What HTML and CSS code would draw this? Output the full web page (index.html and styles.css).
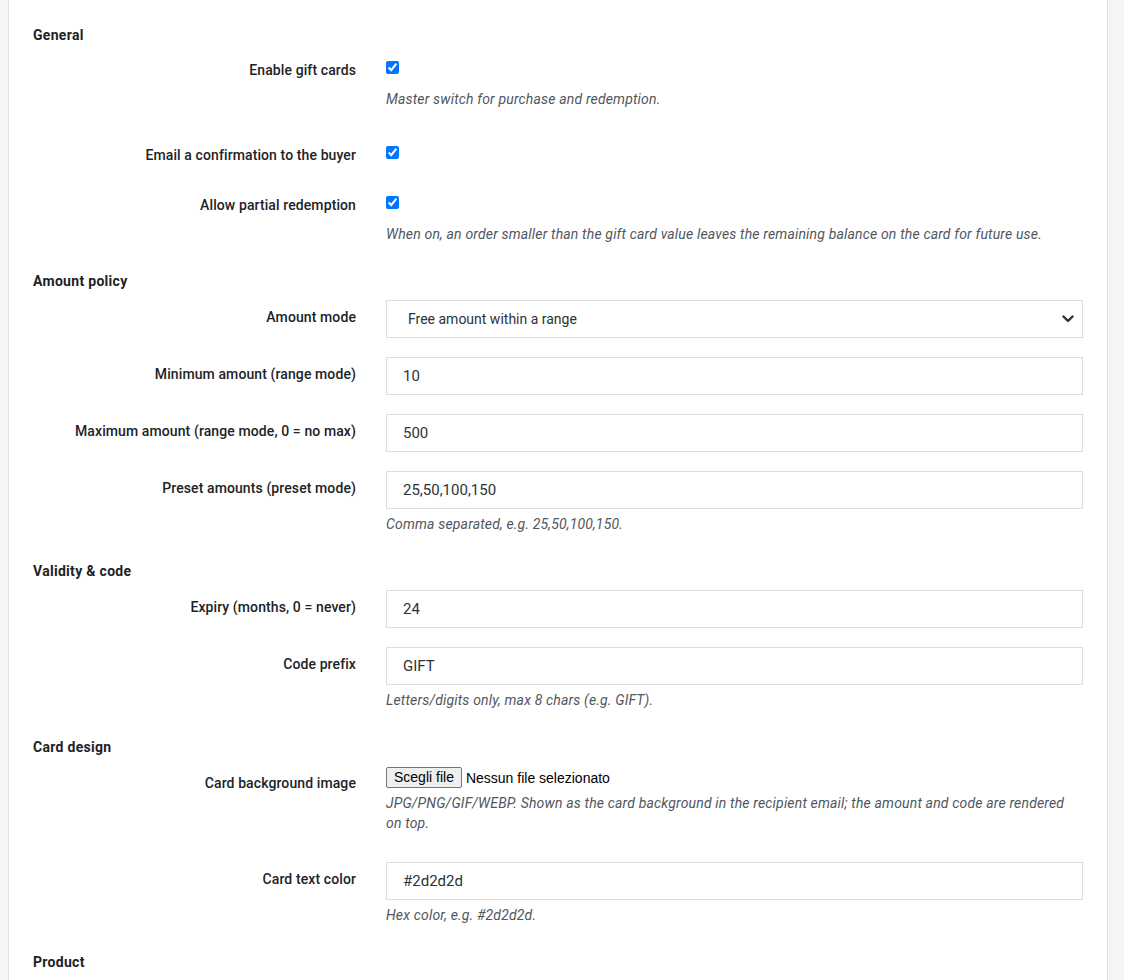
FILE: index.html
```html
<!DOCTYPE html>
<html lang="en">
<head>
  <meta charset="UTF-8">
  <meta name="viewport" content="width=device-width, initial-scale=1.0">
  <title>Gift card settings</title>
  <link rel="stylesheet" href="styles.css">
</head>
<body>

<div class="settings-card">

  <!-- General -->
  <section class="settings-section">
    <h2 class="section-title">General</h2>

    <div class="field-row">
      <label class="field-label" for="enabled">Enable gift cards</label>
      <div class="field-control">
        <div class="check-wrap"><input type="checkbox" id="enabled" checked></div>
        <p class="field-desc">Master switch for purchase and redemption.</p>
      </div>
    </div>

    <div class="field-row">
      <label class="field-label" for="email-buyer">Email a confirmation to the buyer</label>
      <div class="field-control">
        <div class="check-wrap"><input type="checkbox" id="email-buyer" checked></div>
      </div>
    </div>

    <div class="field-row">
      <label class="field-label" for="partial">Allow partial redemption</label>
      <div class="field-control">
        <div class="check-wrap"><input type="checkbox" id="partial" checked></div>
        <p class="field-desc">When on, an order smaller than the gift card value leaves the remaining balance on the card for future use.</p>
      </div>
    </div>
  </section>

  <!-- Amount policy -->
  <section class="settings-section">
    <h2 class="section-title">Amount policy</h2>

    <div class="field-row">
      <label class="field-label" for="amount-mode">Amount mode</label>
      <div class="field-control">
        <div class="select-wrap">
          <select id="amount-mode" class="text-field">
            <option>Free amount within a range</option>
            <option>Preset amounts</option>
          </select>
          <svg class="select-arrow" width="12" height="8" viewBox="0 0 12 8"><path d="M1.5 1.5 L6 6 L10.5 1.5" fill="none" stroke="#2c3338" stroke-width="2.4" stroke-linecap="round" stroke-linejoin="round"/></svg>
        </div>
      </div>
    </div>

    <div class="field-row">
      <label class="field-label" for="min-amount">Minimum amount (range mode)</label>
      <div class="field-control">
        <input type="text" id="min-amount" class="text-field" value="10">
      </div>
    </div>

    <div class="field-row">
      <label class="field-label" for="max-amount">Maximum amount (range mode, 0 = no max)</label>
      <div class="field-control">
        <input type="text" id="max-amount" class="text-field" value="500">
      </div>
    </div>

    <div class="field-row">
      <label class="field-label" for="presets">Preset amounts (preset mode)</label>
      <div class="field-control">
        <input type="text" id="presets" class="text-field" value="25,50,100,150">
        <p class="field-desc">Comma separated, e.g. 25,50,100,150.</p>
      </div>
    </div>
  </section>

  <!-- Validity & code -->
  <section class="settings-section">
    <h2 class="section-title">Validity &amp; code</h2>

    <div class="field-row">
      <label class="field-label" for="expiry">Expiry (months, 0 = never)</label>
      <div class="field-control">
        <input type="text" id="expiry" class="text-field" value="24">
      </div>
    </div>

    <div class="field-row">
      <label class="field-label" for="prefix">Code prefix</label>
      <div class="field-control">
        <input type="text" id="prefix" class="text-field" value="GIFT">
        <p class="field-desc">Letters/digits only, max 8 chars (e.g. GIFT).</p>
      </div>
    </div>
  </section>

  <!-- Card design -->
  <section class="settings-section">
    <h2 class="section-title">Card design</h2>

    <div class="field-row">
      <label class="field-label" for="card-bg">Card background image</label>
      <div class="field-control">
        <label class="file-picker">
          <input type="file" id="card-bg" accept="image/*">
          <span class="file-button">Scegli file</span>
          <span class="file-name">Nessun file selezionato</span>
        </label>
        <p class="field-desc desc-narrow">JPG/PNG/GIF/WEBP. Shown as the card background in the recipient email; the amount and code are rendered on top.</p>
      </div>
    </div>

    <div class="field-row">
      <label class="field-label" for="text-color">Card text color</label>
      <div class="field-control">
        <input type="text" id="text-color" class="text-field" value="#2d2d2d">
        <p class="field-desc">Hex color, e.g. #2d2d2d.</p>
      </div>
    </div>
  </section>

  <!-- Product -->
  <section class="settings-section">
    <h2 class="section-title">Product</h2>
  </section>

</div>

</body>
</html>
```

FILE: styles.css
```css
body {
  margin: 0;
  background-color: #f5f5f5;
  color: #1d2327;
  font-family: Roboto, 'Noto Sans', sans-serif;
  font-size: 14px;
  line-height: 20px;
}

.settings-card {
  width: 1100px;
  box-sizing: border-box;
  margin-left: 8px;
  min-height: 980px;
  padding: 25px 24px 0;
  background-color: #ffffff;
  border-left: 1px solid #e2e2e2;
  border-right: 1px solid #e2e2e2;
}

.section-title {
  margin: -2px 0 9px;
  font-size: 14px;
  line-height: 20px;
  font-weight: 700;
  letter-spacing: 0.3px;
  color: #1d2327;
}

.settings-section:first-child .section-title {
  margin: 0 0 8px;
}

.field-row {
  display: grid;
  grid-template-columns: 323px 1fr;
  column-gap: 30px;
  padding-bottom: 19px;
}

.field-label {
  padding-top: 7px;
  text-align: right;
  font-weight: 500;
  letter-spacing: 0.1px;
  color: #1d2327;
}

.field-control {
  min-width: 0;
}

.check-wrap {
  height: 31px;
  box-sizing: border-box;
  padding-top: 8px;
}

.check-wrap input {
  display: block;
  width: 13px;
  height: 13px;
  margin: 0;
}

.text-field {
  display: block;
  width: 100%;
  height: 38px;
  box-sizing: border-box;
  margin: 0;
  padding: 0 16px;
  border: 1px solid #dcdcde;
  border-radius: 0;
  background-color: #ffffff;
  color: #2c3338;
  font-family: Roboto, 'Noto Sans', sans-serif;
  font-size: 15px;
  outline: none;
}

.text-field:focus {
  border-color: #2271b1;
}

.select-wrap {
  position: relative;
}

.select-wrap select {
  appearance: none;
  -webkit-appearance: none;
  padding-left: 21px;
  padding-right: 36px;
  font-size: 14px;
}

.select-arrow {
  position: absolute;
  right: 9px;
  top: 15px;
  pointer-events: none;
}

.field-desc {
  margin: 5px 0 10px;
  font-style: italic;
  letter-spacing: 0.17px;
  color: #50575e;
}

.desc-narrow {
  max-width: 688px;
}

/* Native-looking file picker */
.file-picker {
  display: flex;
  align-items: center;
  gap: 4px;
  height: 21px;
  margin-top: 1px;
  font-family: 'Liberation Sans', Arial, sans-serif;
  font-size: 14px;
  color: #000000;
  cursor: pointer;
}

.file-picker input {
  display: none;
}

.file-button {
  display: inline-block;
  box-sizing: border-box;
  height: 21px;
  padding: 0 7px;
  line-height: 19px;
  background-color: #efefef;
  border: 1px solid #767676;
  border-radius: 2px;
}

.file-button:hover {
  background-color: #e5e5e5;
}
```
